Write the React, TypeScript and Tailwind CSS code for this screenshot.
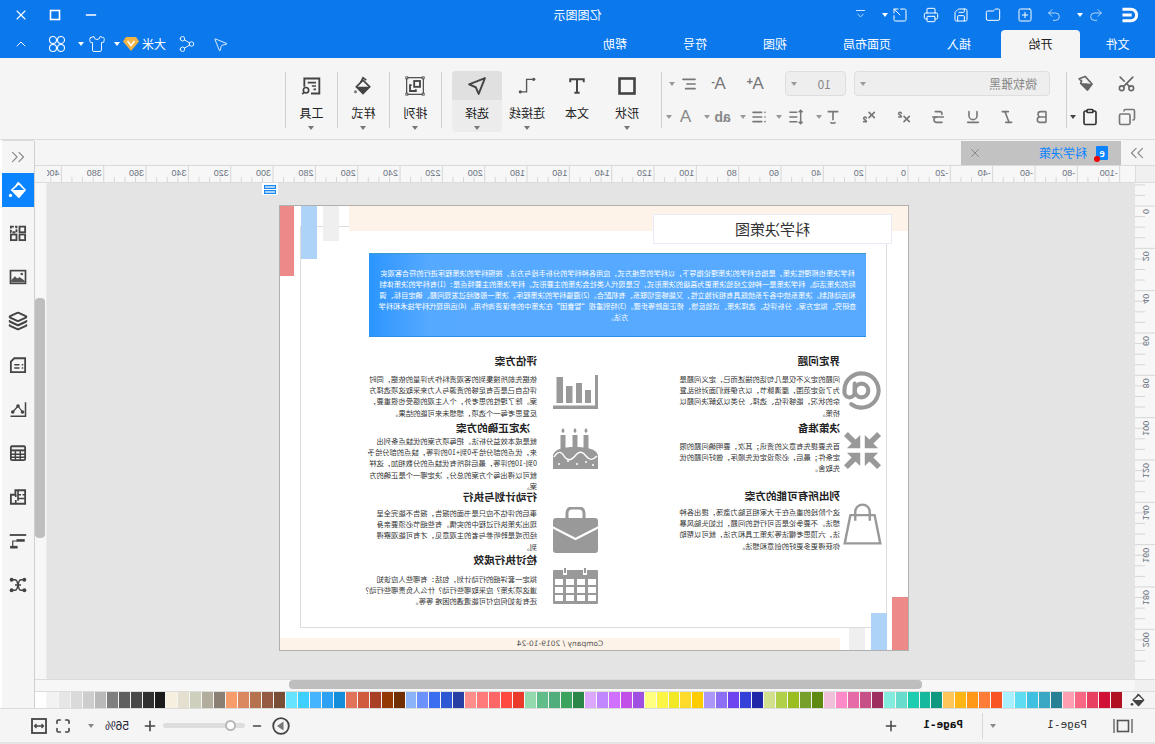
import React from 'react';
import {
  AlignLeft, AtSign, Bold, ChevronDown, ChevronUp, ChevronsLeft, ChevronsRight, Clipboard, Copy,
  Folder, Italic, Layers, List, Maximize, Minus, MousePointer2, Plus, Printer, Redo2, Save,
  Scissors, Share2, Shirt, SquareArrowOutUpRight, SquarePlus, Strikethrough, Subscript,
  Superscript, Underline, Undo2, X,
} from 'lucide-react';

// the reference is a mirrored shot, so the root is flipped and everything below is written un-mirrored

const swatches = [
  '#ffffff', '#f2f2f2', '#e6e6e6', '#dadada', '#cdcdcd', '#b9b9b9', '#7f7f7f', '#5e5e5e', '#484848', '#303030', '#1a1a1a',
  '#f4efdf', '#e5dfd0', '#ced0bd', '#b2ad9d', '#8b7f73',
  '#f79d6c', '#d9885f', '#b6714f', '#955a42', '#794e36',
  '#66e3ff', '#3dcfff', '#44b4ff', '#2da2f5', '#148ddb',
  '#e0735a', '#d05a3e', '#a93f25', '#933800', '#712f00',
  '#8ab3f8', '#6b92ff', '#3a6df0', '#2e58d3', '#2840a4',
  '#ff8d8a', '#ff7a7a', '#ff6666', '#ff4a42', '#e93a2c',
  '#93d9ae', '#60bd8a', '#52ad7c', '#3ba35e', '#2b8749',
  '#dca8ff', '#c087ff', '#d070ff', '#c150e8', '#a050e0',
  '#ffff80', '#fcf545', '#f2e826', '#ffdb2c', '#ffcc00',
  '#ac96f8', '#8c6ff5', '#6e44f0', '#3440d8', '#1f27a8',
  '#d2e08e', '#b0d048', '#9abd20', '#76a02a', '#5e8a12',
  '#f0c0d8', '#ff8ac8', '#e66aa8', '#c85088', '#9e2e60',
  '#84ecdc', '#68dccc', '#1ccdb0', '#14b89c', '#119880',
  '#ffc558', '#ffb614', '#ff9818', '#ff7c38', '#f85424',
  '#a8f0ff', '#60dcf0', '#40c0e0', '#38a8c4', '#288094',
  '#ff9eb0', '#f86884', '#e84060', '#d01034', '#b01020',
];

const tabs = [
  { label: '文件', w: 'w-[75px]' },
  { label: '开始', w: 'w-[79px]', active: true },
  { label: '插入', w: 'w-[84px]' },
  { label: '页面布局', w: 'w-[100px]' },
  { label: '视图', w: 'w-[84px]' },
  { label: '符号', w: 'w-[76px]' },
  { label: '帮助', w: 'w-[84px]' },
];

// full-width punctuation for the Chinese copy
const zh = (s: string) =>
  s.replace(/,/g, '\uFF0C').replace(/;/g, '\uFF1B').replace(/:/g, '\uFF1A').replace(/\?/g, '\uFF1F');

// drawn as seen in the shot, then flipped back so the root flip lands it right
function Flip({ w = 18, h = 18, box = '0 0 24 24', className = '', children }: { w?: number; h?: number; box?: string; className?: string; children: React.ReactNode }) {
  return (
    <svg width={w} height={h} viewBox={box} className={`-scale-x-100 shrink-0 ${className}`}>
      {children}
    </svg>
  );
}

const Caret = ({ className = 'border-t-[#777]' }: { className?: string }) => (
  <span className={`block w-0 h-0 border-x-[3px] border-x-transparent border-t-[4px] shrink-0 ${className}`} />
);

const Bucket = ({ color, w = 18, h = 18 }: { color: string; w?: number; h?: number }) => (
  <Flip w={w} h={h}>
    <path d="M4.5 12 13 4l7.5 8-7.5 8.5z" fill="none" stroke={color} strokeWidth="2" strokeLinejoin="round" />
    <path d="M4.5 12h16l-7.5 8.5z" fill={color} />
    <path d="M9.5 7.5 12 3.5l3.5 3" fill="none" stroke={color} strokeWidth="1.8" />
    <circle cx="3" cy="18.5" r="2" fill={color} />
  </Flip>
);

const sideIcons = [
  <Flip key="grid"><g fill="none" stroke="#444" strokeWidth="2.4"><rect x="2.5" y="3.5" width="7.5" height="7.5" strokeDasharray="4 1.5" /><rect x="14" y="3.5" width="7.5" height="7.5" /><rect x="2.5" y="14" width="7.5" height="7.5" /><rect x="14" y="14" width="7.5" height="7.5" /></g></Flip>,
  <Flip key="image"><rect x="2" y="3.5" width="20" height="17" fill="none" stroke="#444" strokeWidth="2.2" /><path d="M3 19v-3l5-5 3 3 3-2 7 5v2z" fill="#555" /><circle cx="17" cy="8" r="1.8" fill="#555" /></Flip>,
  <Layers key="layers" size={20} color="#444" strokeWidth={2.4} />,
  <Flip key="note"><path d="M7 3h14.5v18.5h-19V7.5z" fill="none" stroke="#444" strokeWidth="2.4" /><path d="M7 11.5h7M7 16h7M17 11.5h2M17 16h2" stroke="#444" strokeWidth="2" /></Flip>,
  <Flip key="graph"><path d="M22 3v18.5H2" fill="none" stroke="#444" strokeWidth="2" /><path d="M5 16 12 8l6 8" fill="none" stroke="#444" strokeWidth="1.6" /><circle cx="5" cy="16" r="2.4" fill="#444" /><circle cx="12" cy="8" r="2.4" fill="#444" /><circle cx="18" cy="16" r="2.4" fill="#444" /></Flip>,
  <Flip key="table"><rect x="2.5" y="3" width="19" height="18.5" rx="1.5" fill="none" stroke="#444" strokeWidth="2.4" /><path d="M2.5 8.5h19" stroke="#444" strokeWidth="2.6" /><path d="M2.5 13.5h19M2.5 17.5h19M8.5 8.5v13M15 8.5v13" stroke="#444" strokeWidth="2" /></Flip>,
  <Flip key="plan"><path d="M2.5 9h6V3h13v18h-19z" fill="none" stroke="#444" strokeWidth="2.4" /><path d="M9 9v3M9 16v5M12 3v6h4M12 9v8M12 14h9M18 9h4" stroke="#444" strokeWidth="2.2" fill="none" /></Flip>,
  <Flip key="tree"><path d="M1 4h22" stroke="#444" strokeWidth="2.4" /><path d="M5 19v-7h6" fill="none" stroke="#444" strokeWidth="1.6" /><rect x="10" y="9.5" width="11" height="3.5" fill="#444" /><rect x="1.5" y="18.5" width="10" height="3.5" fill="#444" /></Flip>,
  <Flip key="mind"><path d="M4 5h4c3 0 3 3 4 7s1 7 4 7h4M4 19h4c3 0 3-3 4-7s1-7 4-7h4M8 12h8" fill="none" stroke="#444" strokeWidth="1.8" /><circle cx="3.5" cy="5" r="2.6" fill="#444" /><circle cx="20.5" cy="5" r="2.6" fill="#444" /><circle cx="3.5" cy="19" r="2.6" fill="#444" /><circle cx="20.5" cy="19" r="2.6" fill="#444" /></Flip>,
];

const GrayIcon = {
  stat: (
    <Flip w={45} h={34} box="0 0 45 34">
      <g fill="#999"><rect x="3.5" y="2" width="6.5" height="26" /><rect x="13" y="11" width="6.5" height="17" /><rect x="23" y="8" width="6" height="20" /><rect x="32" y="15" width="6" height="13" /><rect x="42" y="0" width="3" height="34" /><rect x="0" y="30.5" width="45" height="3.5" /></g>
    </Flip>
  ),
  cake: (
    <Flip w={45} h={42} box="0 0 45 42">
      <g fill="#999">
        <path d="M10 1c2 2 2 4 0 5-2-1-2-3 0-5zM22 1c2 2 2 4 0 5-2-1-2-3 0-5zM33 1c2 2 2 4 0 5-2-1-2-3 0-5z" />
        <rect x="7.5" y="8" width="5" height="14" /><rect x="19.5" y="8" width="5" height="14" /><rect x="30.5" y="8" width="5" height="14" />
        <path d="M0 28c2-6 10-8 22-8s21 2 23 8v14H0z" />
      </g>
      <path d="M1 30c4-6 7-6 10-1s7 5 11 0 7-5 11 0 7 4 11 0" fill="none" stroke="#fff" strokeWidth="1.4" />
      <g fill="#fff"><circle cx="6" cy="37" r="1" /><circle cx="15" cy="34" r="1" /><circle cx="24" cy="37" r="1" /><circle cx="33" cy="35" r="1" /><circle cx="40" cy="38" r="1" /></g>
    </Flip>
  ),
  case: (
    <Flip w={45} h={46} box="0 0 45 46">
      <path d="M14 11V6c0-3 2-5 5-5h7c3 0 5 2 5 5v5" fill="none" stroke="#999" strokeWidth="3" />
      <rect x="0" y="11" width="45" height="35" rx="3" fill="#999" />
      <path d="M-1 20 22.5 32 46 20" fill="none" stroke="#fff" strokeWidth="2.4" />
    </Flip>
  ),
  cal: (
    <Flip w={45} h={36} box="0 0 45 36">
      <rect x="0" y="2" width="45" height="34" rx="1" fill="#999" />
      <g fill="#fff">
        <rect x="10" y="0" width="4" height="7" /><rect x="30" y="0" width="4" height="7" />
        {[11, 19, 27].map((y) => [2, 13, 24, 35].map((x) => <rect key={`${x}-${y}`} x={x} y={y} width="8" height="6" />))}
      </g>
      <g fill="#999"><rect x="11" y="0" width="2" height="5" /><rect x="31" y="0" width="2" height="5" /></g>
    </Flip>
  ),
  compress: (
    <svg width="39" height="41" viewBox="0 0 24 24" className="shrink-0">
      {['', 'translate(24 0) scale(-1 1)', 'translate(0 24) scale(1 -1)', 'translate(24 24) scale(-1 -1)'].map((t) => (
        <path key={t} transform={t} d="M10.6 10.6H2.4l2.9-2.9L.6 3 3 .6l4.7 4.7 2.9-2.9z" fill="#999" />
      ))}
    </svg>
  ),
  bag: (
    <Flip w={39} h={42} box="0 0 24 26">
      <path d="M4.5 7.5h15l3.5 17.5H1z" fill="none" stroke="#999" strokeWidth="1.5" />
      <path d="M7.5 11V5.5a4.5 4.5 0 0 1 9 0V11" fill="none" stroke="#999" strokeWidth="1.5" />
    </Flip>
  ),
};

const leftCol = [
  {
    h: 'h-[67px]', iconTop: 'mt-[17px]', icon: <AtSign size={41} color="#999" strokeWidth={2.4} />, bodyTop: 'mt-[5px]', title: '界定问题',
    lines: ['问题的定义不仅是几句话的描述而已,定义问题是', '为了设定范围,厘清脉节,以方便我们面对纷乱复', '杂的状况,能够评估、选择、分类以及解决问题以', '桥策。'],
  },
  {
    h: 'h-[68px]', iconTop: 'mt-[10px]', icon: GrayIcon.compress, bodyTop: 'mt-[5px]', title: '决策准备',
    lines: ['首先要提先有意义的资讯;其次,要明确问题的限', '定条件;最后,必须设定优先顺序,做好问题的优', '先取舍。'],
  },
  {
    h: 'h-[67px]', iconTop: 'mt-[15px]', icon: GrayIcon.bag, bodyTop: 'mt-[3px]', title: '列出所有可能的方案',
    lines: ['这个阶段的重点在于大家相互脑力激荡,提出各种', '想法。不要争论是否可行性的问题,比如头脑风暴', '法,六顶思考帽法等决策工具和方法,就可以帮助', '你获得更多更好的创意和想法。'],
  },
];

const rightCol = [
  {
    h: 'h-[67px]', iconTop: 'mt-[22px]', icon: GrayIcon.stat, bodyTop: 'mt-[5px]', title: '评估方案',
    lines: ['依据先前所搜集到的客观资料作为评量的依据,同时', '评估自己是否有足够的资源与人力来采取这项选择方', '案。除了理性的思考外,个人主观的感受也很重要,', '反复思考每一个选项,想想未来可能的结果。'],
  },
  {
    h: 'h-[69px]', iconTop: 'mt-[7px]', icon: GrayIcon.cake, bodyTop: 'mt-0', title: '决定正确的方案', indent: 'pl-[7px]',
    lines: ['就是成本效益分析法。把每项方案的优缺点条列出', '来,优点的部分给予0到+10的评等,缺点的部分给予', '0到-10的评等,最后将所有优缺点的分数相加,这样', '就可以得出每个方案的总分,决定哪一个是正确的方', '案。'],
  },
  {
    h: 'h-[63px]', iconTop: 'mt-[18px]', icon: GrayIcon.case, bodyTop: 'mt-[3px]', title: '行动计划与执行',
    lines: ['事后的评估不应只是书面的报告,报告不能完全呈', '现出决策执行过程中的实情。有些细节必须要亲身', '经历或是聆听参与者的主观意见,才有可能观察得', '到。'],
  },
  {
    h: 'h-[60px]', iconTop: 'mt-[16px]', icon: GrayIcon.cal, bodyTop: 'mt-[6px]', title: '检讨执行成效',
    lines: ['拟定一套详细的行动计划,包括:有哪些人应该知', '道这项决策?应采取哪些行动?什么人负责哪些行动?', '还有该如何应付可能遭遇的困难 等等。'],
  },
];

const introLines = [
  '科学决策也称理性决策,是指在科学的决策理论指导下,以科学的思维方式,应用各种科学的分析手段与方法,按照科学的决策程序进行的符合客观实',
  '际的决策活动。科学决策是一种较之经验决策更为高级的决策形式,它是现代人类社会决策的主要形式。科学决策的主要特点是:(1)有科学的决策体制',
  '和运动机制。决策系统中各子系统既具有相对独立性,又能够密切联系、有机配合。(2)遵循科学的决策程序。决策一般都经过发现问题、确定目标、调',
  '查研究、拟定方案、分析评估、选择决策、试验反馈、修正追踪等步骤。(3)特别重视“智囊团”在决策中的参谋咨询作用。(4)运用现代科学技术和科学',
  '方法。',
];

type Sec = (typeof leftCol)[number] & { indent?: string };

function Section({ sec, iconW, textW }: { sec: Sec; iconW: string; textW: string }) {
  return (
    <div className={`flex ${sec.h}`}>
      <div className={`shrink-0 ${iconW} ${sec.iconTop}`}>{sec.icon}</div>
      <div className={textW}>
        <div className={`h-4 leading-4 text-[10.6px] font-bold text-[#222] whitespace-nowrap ${sec.indent ?? ''}`}>{sec.title}</div>
        <div className={`text-[7.3px] leading-[11.2px] text-[#333] ${sec.bodyTop}`}>
          {sec.lines.map((l) => (
            <div key={l} className="whitespace-nowrap">{zh(l)}</div>
          ))}
        </div>
      </div>
    </div>
  );
}

const UNIT = 42.33;

function HRuler() {
  const marks = Array.from({ length: 26 }, (_, i) => i - 5);
  return (
    <svg width="1088" height="16" className="block overflow-visible font-['Liberation_Sans',sans-serif]">
      {marks.map((n) => {
        const x = 227 + n * UNIT;
        return (
          <g key={n}>
            <line x1={x} x2={x} y1={0} y2={16} stroke="#d6d6d6" />
            {[1, 2, 3].map((q) => (
              <line key={q} x1={x + (q * UNIT) / 4} x2={x + (q * UNIT) / 4} y1={11} y2={16} stroke="#d6d6d6" />
            ))}
            <text x={x + 2} y={10} fontSize="9" fill="#6a7280">{n * 20}</text>
          </g>
        );
      })}
    </svg>
  );
}

function VRuler() {
  const marks = Array.from({ length: 11 }, (_, i) => i);
  return (
    <svg width="20" height="497" className="block font-['Liberation_Sans',sans-serif]">
      {[-1, ...marks].map((n) => {
        const y = 23 + n * UNIT;
        return (
          <g key={n}>
            <line x1={0} x2={20} y1={y} y2={y} stroke="#d6d6d6" />
            {[1, 2, 3].map((q) => (
              <line key={q} x1={10} x2={20} y1={y + (q * UNIT) / 4} y2={y + (q * UNIT) / 4} stroke="#d6d6d6" />
            ))}
            {n >= 0 && (
              <text transform={`translate(12 ${y + 3}) rotate(-90)`} textAnchor="end" fontSize="9" fill="#6a7280">{n * 20}</text>
            )}
          </g>
        );
      })}
    </svg>
  );
}

function BigButton({ label, icon, caret = true, active }: { label: string; icon: React.ReactNode; caret?: boolean; active?: boolean }) {
  return (
    <div className={`w-[50px] h-[61px] flex flex-col items-center rounded-sm ${active ? 'bg-[#ececec]' : ''}`}>
      <div className={`w-full h-[29px] flex items-center justify-center rounded-t-sm ${active ? 'bg-[#e0e0e0]' : ''}`}>{icon}</div>
      <div className="mt-[3px] h-[20px] leading-[20px] text-xs text-[#222]">{label}</div>
      {caret && <Caret className="mt-[3px] border-t-[#777]" />}
    </div>
  );
}

const Sep = ({ className = '' }: { className?: string }) => <div className={`w-px h-[56px] mt-[1px] bg-[#cfcfcf] shrink-0 ${className}`} />;

function MiniA({ sign }: { sign?: string }) {
  return (
    <span className="relative block w-6 text-center leading-6 text-[17px] text-[#777] font-['Liberation_Sans',sans-serif]">
      A
      {sign && <span className="absolute -top-[3px] left-[17px] font-bold text-[11px] text-[#777]">{sign}</span>}
    </span>
  );
}

function Ribbon() {
  const gray = { size: 16, color: '#777', strokeWidth: 2.4 };
  return (
    <div className="h-[82px] bg-[#f5f5f5] border-b border-[#dcdcdc] pt-[13px] flex">
      {/* clipboard */}
      <div className="w-[88px] h-[60px] relative shrink-0">
        <div className="flex items-center h-[25px] pl-[19px]">
          <Scissors size={19} color="#666" strokeWidth={2} className="-rotate-90" />
          <Flip w={18} h={18} className="ml-[22px]">
            <path d="M3 5 11 2l9 10-6 8-9-9 1-3z" fill="none" stroke="#666" strokeWidth="2.4" strokeLinejoin="round" />
            <path d="M5 11l9 9 6-8-8-1z" fill="#666" />
          </Flip>
        </div>
        <div className="flex items-center h-[25px] mt-[8px] pl-[19px]">
          <Copy size={18} color="#777" strokeWidth={2.2} />
          <Clipboard size={18} color="#333" strokeWidth={2.2} className="ml-[19px]" />
          <Caret className="ml-[5px] border-t-[#444]" />
        </div>
      </div>
      <Sep />
      {/* font */}
      <div className="w-[404px] h-[60px] shrink-0">
        <div className="flex items-center h-[25px]">
          <div className="w-[196px] h-[25px] ml-[16px] bg-[#eeeeee] border border-[#dedede] rounded-sm flex items-center pl-[12px] pr-[5px] text-xs text-[#888]">
            微软雅黑<Caret className="ml-auto border-t-[#999]" />
          </div>
          <div className="w-[61px] h-[25px] ml-[8px] bg-[#eeeeee] border border-[#dedede] rounded-sm flex items-center pl-[14px] pr-[5px] text-xs text-[#888]">
            10<Caret className="ml-auto border-t-[#999]" />
          </div>
          <div className="ml-[15px]"><MiniA sign="+" /></div>
          <div className="ml-[14px]"><MiniA sign="-" /></div>
          <AlignLeft size={16} color="#777" strokeWidth={2.6} className="ml-[11px]" />
          <Caret className="ml-[6px] border-t-[#999]" />
        </div>
        <div className="flex items-center h-[25px] mt-[8px] pl-[7px]">
          {[Bold, Italic, Underline, Strikethrough, Superscript, Subscript].map((Ic, i) => (
            <div key={i} className="w-[34.5px] flex justify-center"><Ic {...gray} /></div>
          ))}
          <div className="w-[37px] flex items-center justify-center relative">
            <Flip w={16} h={16}>
              <path d="M4 4h16M12 4v13M8 4V3M16 4V3M8 20c3 2 5 2 8 0" stroke="#777" strokeWidth="2.4" fill="none" />
            </Flip>
            <Caret className="absolute right-[1px] top-[6px] border-t-[#999]" />
          </div>
          <div className="w-[37px] flex items-center justify-center relative">
            <Flip w={18} h={16}>
              <path d="M2 5h12M2 12h12M2 19h12M19 2v20M16 5l3-3 3 3M16 19l3 3 3-3" stroke="#777" strokeWidth="2.2" fill="none" />
            </Flip>
            <Caret className="absolute right-[-2px] top-[6px] border-t-[#999]" />
          </div>
          <div className="w-[37px] flex items-center justify-center relative">
            <List {...gray} />
            <Caret className="absolute right-[-1px] top-[6px] border-t-[#999]" />
          </div>
          <div className="w-[37px] flex items-center justify-center relative">
            <span className="text-[14px] leading-4 font-bold text-[#888] font-['Liberation_Sans',sans-serif]">ab</span>
            <Caret className="absolute right-[0px] top-[6px] border-t-[#999]" />
          </div>
          <div className="w-[37px] flex items-center justify-center relative">
            <span className="text-[17px] leading-4 text-[#888] font-['Liberation_Sans',sans-serif]">A</span>
            <Caret className="absolute right-[-1px] top-[6px] border-t-[#999]" />
          </div>
        </div>
      </div>
      <Sep />
      {/* shapes */}
      <div className="w-[9px] shrink-0" />
      <BigButton label="形状" icon={<svg width="18" height="18"><rect x="1.5" y="1.5" width="15" height="15" fill="none" stroke="#444" strokeWidth="2.6" /></svg>} />
      <BigButton
        label="文本"
        caret={false}
        icon={
          <Flip w={18} h={18}>
            <path d="M3 7V3h18v4M12 3v18M8.5 21h7" fill="none" stroke="#444" strokeWidth="2.6" />
          </Flip>
        }
      />
      <BigButton
        label="连接线"
        icon={
          <Flip w={20} h={20}>
            <path d="M5 19h6.5V4H18" fill="none" stroke="#555" strokeWidth="1.6" />
            <circle cx="4" cy="19" r="2" fill="#555" />
            <circle cx="20" cy="4" r="2" fill="#555" />
          </Flip>
        }
      />
      <BigButton
        label="选择"
        active
        icon={
          <Flip w={20} h={20}>
            <path d="M21.5 2.5 2.5 10l8 3.5 3.5 8z" fill="none" stroke="#444" strokeWidth="2.3" strokeLinejoin="round" />
          </Flip>
        }
      />
      <div className="w-[10px] shrink-0" />
      <Sep />
      <div className="w-[51px] shrink-0 flex justify-center">
        <BigButton
          label="排列"
          icon={
            <Flip w={20} h={20}>
              <rect x="2" y="2" width="20" height="20" fill="none" stroke="#444" strokeWidth="1.4" />
              <g fill="#fff" stroke="#444"><rect x="1" y="1" width="2.4" height="2.4" /><rect x="20.6" y="1" width="2.4" height="2.4" /><rect x="1" y="20.6" width="2.4" height="2.4" /><rect x="20.6" y="20.6" width="2.4" height="2.4" /></g>
              <rect x="11" y="6" width="7" height="7" fill="none" stroke="#444" strokeWidth="2.2" />
              <path d="M8 11H6v7h7v-2" fill="none" stroke="#444" strokeWidth="2.2" />
            </Flip>
          }
        />
      </div>
      <Sep />
      <div className="w-[51px] shrink-0 flex justify-center">
        <BigButton
          label="样式"
          icon={
            <Flip w={20} h={20}>
              <path d="M4 13 12 5l8 8-8 8z" fill="none" stroke="#444" strokeWidth="2" />
              <path d="M4 13h16l-8 8z" fill="#444" />
              <path d="M9 8l3-6 4 3" fill="none" stroke="#444" strokeWidth="1.8" />
              <circle cx="3" cy="19" r="1.8" fill="#777" />
            </Flip>
          }
        />
      </div>
      <Sep />
      <div className="w-[51px] shrink-0 flex justify-center">
        <BigButton
          label="工具"
          icon={
            <Flip w={20} h={20}>
              <path d="M4 13V3h18v18H12" fill="none" stroke="#444" strokeWidth="2.2" />
              <path d="M8 8h10M13 12h5M15 16h3" stroke="#444" strokeWidth="2" />
              <circle cx="6" cy="17" r="3.2" fill="none" stroke="#444" strokeWidth="2" />
              <path d="M3.5 19.5 1.5 22" stroke="#444" strokeWidth="2" />
            </Flip>
          }
        />
      </div>
      <Sep />
    </div>
  );
}

const Square16 = () => (
  <svg width="16" height="16" className="ml-[20px]"><rect x="3.5" y="3.5" width="9" height="9" fill="none" stroke="#fff" strokeWidth="1.6" /></svg>
);

function Header() {
  const ic = { size: 16, color: '#fff', strokeWidth: 1.5 };
  return (
    <div className="h-[58px] bg-[#0b78ec] text-white shrink-0">
      <div className="h-[30px] grid grid-cols-[1fr_auto_1fr] items-center">
        <div className="flex items-center pl-[15px]">
          <svg width="20" height="20" viewBox="0 0 24 24">
            <path d="M21 5H11a7 7 0 0 0 0 14h10M10 12h11" fill="none" stroke="#fff" strokeWidth="3.6" />
          </svg>
          <Undo2 {...ic} className="ml-[16px] opacity-70" />
          <Caret className="ml-[5px] border-t-white" />
          <Redo2 {...ic} className="ml-[15px] opacity-70" />
          <SquarePlus {...ic} className="ml-[13px]" />
          <Folder {...ic} className="ml-[16px]" />
          <Save {...ic} className="ml-[16px]" />
          <Printer {...ic} className="ml-[14px]" />
          <SquareArrowOutUpRight {...ic} className="ml-[15px]" />
          <Caret className="ml-[4px] border-t-white" />
          <div className="ml-[15px] w-3 flex flex-col items-center">
            <span className="w-[9px] h-px bg-white opacity-80" />
            <ChevronDown size={11} color="#fff" className="-mt-px opacity-80" />
          </div>
        </div>
        <div className="text-xs text-center">亿图图示</div>
        <div className="flex items-center justify-end pr-[13px]">
          <Minus size={16} color="#fff" strokeWidth={2} />
          <Square16 />
          <X size={16} color="#fff" strokeWidth={1.6} className="ml-[18px]" />
        </div>
      </div>
      <div className="h-[28px] flex items-center">
        <div className="flex h-full">
          {tabs.map((t) => (
            <div key={t.label} className={`${t.w} flex items-center justify-center text-xs ${t.active ? 'bg-[#f5f5f5] text-[#222] rounded-t-sm' : ''}`}>
              {t.label}
            </div>
          ))}
        </div>
        <div className="flex items-center ml-[335px]">
          <div className="w-[34px] flex justify-center"><MousePointer2 size={17} color="#fff" strokeWidth={1.2} className="-scale-x-100" /></div>
          <div className="w-[34px] flex justify-center"><Share2 size={18} color="#fff" strokeWidth={1.2} /></div>
          <span className="ml-[4px] w-6 text-xs">大米</span>
          <svg width="16" height="14" viewBox="0 0 16 14" className="ml-[3px]">
            <path d="M3 0h10l3 4.5L8 14 0 4.5z" fill="#f3b345" />
            <path d="M4.5 4 8 8.5 11.5 4" fill="none" stroke="#fff" strokeWidth="1.6" />
          </svg>
          <Caret className="ml-[3px] border-t-white" />
          <Shirt size={18} color="#fff" strokeWidth={1.2} className="ml-[8px]" />
          <Caret className="ml-[4px] border-t-white" />
          <svg width="18" height="18" viewBox="0 0 18 18" className="ml-[12px]" fill="none" stroke="#fff" strokeWidth="1.1">
            <circle cx="5" cy="5" r="3.5" /><circle cx="13" cy="5" r="3.5" /><circle cx="5" cy="13" r="3.5" /><circle cx="13" cy="13" r="3.5" />
          </svg>
          <ChevronUp size={16} color="#fff" strokeWidth={1.5} className="ml-[19px]" />
        </div>
      </div>
    </div>
  );
}

function Page() {
  return (
    <div className="relative ml-[226px] mt-[22px] w-[630px] h-[446px] bg-white border border-[#b0b0b0]">
      <div className="absolute left-[21px] top-[20px] w-[587px] h-[402px] border border-[#dcdcdc]" />
      <div className="absolute left-0 top-0 w-[559px] h-[25px] bg-[#fef3e8]" />
      <div className="absolute right-0 top-0 w-[14px] h-[70px] bg-[#ec8989]" />
      <div className="absolute right-[21px] top-0 w-4 h-[53px] bg-[#add4f8]" />
      <div className="absolute right-[43px] top-0 w-4 h-[35px] bg-[#efefef]" />
      <div className="absolute left-0 bottom-0 w-4 h-[53px] bg-[#ec8989]" />
      <div className="absolute left-[21px] bottom-0 w-4 h-[37px] bg-[#add4f8]" />
      <div className="absolute left-[43px] bottom-0 w-4 h-[22px] bg-[#efefef]" />
      <div className="absolute left-[68px] bottom-0 w-[560px] h-3 bg-[#fef3e8] flex items-center justify-center text-[7.5px] text-[#555] font-['DejaVu_Sans',sans-serif]">
        Company / 2019-10-24
      </div>
      <div className="absolute left-[16px] top-[8px] w-[239px] h-[30px] bg-white border border-[#e8ecf8] flex items-center justify-center text-[15px] text-[#333]">
        科学决策图
      </div>

      <div className="relative pt-[47px]">
        <div className="ml-[42px] w-[497px] h-[84px] bg-linear-to-r from-[#57aaff] via-[#55a9ff] via-[88%] to-[#2a95ff] border-t border-t-[#3d9bd0] border-b border-b-[#2e8fe8] flex flex-col justify-center items-center text-[7.2px] leading-[11px] text-white">
          {introLines.map((l) => (
            <div key={l} className="whitespace-nowrap">{zh(l)}</div>
          ))}
        </div>
        <div className="flex mt-[16px] ml-[26px]">
          <div className="w-[284px]">
            {leftCol.map((s) => <Section key={s.title} sec={s} iconW="w-[42px]" textW="w-[170px]" />)}
          </div>
          <div>
            {rightCol.map((s) => <Section key={s.title} sec={s} iconW="w-[61px]" textW="w-[176px]" />)}
          </div>
        </div>
      </div>
    </div>
  );
}

export default function App() {
  return (
    <div className="w-[1155px] h-[744px] -scale-x-100 overflow-hidden bg-white flex flex-col font-['Noto_Sans_CJK_SC','Liberation_Sans',sans-serif]">
      <Header />
      <Ribbon />
      <div className="h-[568px] flex shrink-0">
        <div className="w-[1120px] flex flex-col">
          {/* file tabs */}
          <div className="h-[26px] bg-[#f5f5f5] border-b border-[#dadada] flex shrink-0">
            <div className="w-[34px] flex items-center justify-center pl-[2px]">
              <ChevronsRight size={22} color="#888" strokeWidth={1.2} />
            </div>
            <div className="w-[160px] h-[24px] mt-px bg-[#c2c2c2] flex items-center pl-[13px] text-xs text-[#0a84ff]">
              <span className="relative w-3 h-[14px] bg-[#0a84ff] rounded-[1px] flex items-center justify-center text-[9px] leading-none text-white font-bold shrink-0">
                e
                <span className="absolute -right-[2px] bottom-[-2px] w-[6px] h-[6px] rounded-full bg-[#f00000]" />
              </span>
              <span className="ml-[9px]">科学决策</span>
              <X size={14} color="#777" strokeWidth={1.3} className="ml-[57px]" />
            </div>
          </div>
          {/* ruler row */}
          <div className="h-[17px] flex shrink-0 bg-[#f7f7f7] border-b border-[#dcdcdc]">
            <div className="w-5 bg-[#f0f0f0] border-r border-[#dcdcdc] shrink-0" />
            <HRuler />
            <div className="w-3 bg-[#f5f5f5] shrink-0" />
          </div>
          <div className="h-[496px] flex shrink-0 overflow-hidden">
            <div className="w-5 bg-[#f7f7f7] shrink-0"><VRuler /></div>
            <div className="relative w-[1088px] h-full bg-[#e4e4e4] shrink-0">
              <Page />
              <div className="absolute left-[857px] top-0 w-4 h-3 bg-white flex flex-col items-center justify-center gap-px">
                <span className="w-3 h-1 border border-[#1a86f0] bg-[#a8d2f8]" />
                <span className="w-3 h-1 border border-[#1a86f0] bg-[#a8d2f8]" />
              </div>
            </div>
            <div className="relative w-3 bg-[#f7f7f7] border-l border-[#ececec] shrink-0">
              <div className="ml-px mt-[115px] w-[10px] h-[240px] rounded bg-[#bebebe]" />
            </div>
          </div>
          {/* bottom scrollbar */}
          <div className="h-[12px] flex shrink-0 bg-[#f7f7f7] border-t border-[#dcdcdc]">
            <div className="w-5 bg-[#f0f0f0]" />
            <div className="w-[1088px]">
              <div className="ml-[213px] w-[633px] h-[9px] rounded bg-[#bebebe]" />
            </div>
          </div>
          {/* colour strip */}
          <div className="h-[17px] flex shrink-0 bg-[#f5f5f5] border-t border-[#dcdcdc]">
            <div className="w-[33px] flex items-center justify-center shrink-0"><Bucket color="#444" w={16} h={16} /></div>
            <div className="flex-1 flex flex-row-reverse gap-px">
              {swatches.map((c, i) => (
                <div key={i} className="flex-1" style={{ backgroundColor: c }} />
              ))}
            </div>
          </div>
        </div>
        {/* side rail */}
        <div className="w-px bg-[#cfcfcf] shrink-0 mt-px" />
        <div className="w-[32px] bg-[#f5f5f5] flex flex-col items-center shrink-0">
          <div className="h-[33px] w-full flex items-center justify-center border-t border-[#dadada]">
            <ChevronsLeft size={22} color="#888" strokeWidth={1.2} />
          </div>
          <div className="h-[34px] w-full bg-[#0a84ff] flex items-center justify-center">
            <Bucket color="#fff" w={20} h={20} />
          </div>
          <div className="h-1" />
          {sideIcons.map((ic) => (
            <div key={ic.key} className="h-[44px] flex items-center justify-center">{ic}</div>
          ))}
        </div>
        <div className="w-[2px] bg-white shrink-0" />
      </div>
      {/* status bar */}
      <div className="h-[36px] bg-[#f5f5f5] border-t border-[#dcdcdc] border-b-2 border-b-[#e4e4e4] flex items-center shrink-0 pl-[22px] pr-[31px]">
        <svg width="20" height="14" viewBox="0 0 20 14" className="shrink-0">
          <rect x="4.5" y="1.5" width="11" height="11" fill="none" stroke="#555" strokeWidth="1.6" />
          <path d="M1 0v14M19 0v14" stroke="#666" strokeWidth="1.4" />
        </svg>
        <span className="ml-[26px] w-[40px] text-[11px] text-[#333] font-['DejaVu_Sans_Mono',monospace]">Page-1</span>
        <Caret className="ml-[51px] border-t-[#888]" />
        <div className="ml-[7px] w-px h-[26px] bg-[#d8d8d8]" />
        <span className="ml-[19px] w-[40px] text-[11px] font-bold text-[#111] font-['DejaVu_Sans_Mono',monospace]">Page-1</span>
        <Plus size={16} color="#444" strokeWidth={2.2} className="ml-[24px]" />
        <div className="ml-auto flex items-center">
          <svg width="18" height="18" viewBox="0 0 18 18">
            <circle cx="9" cy="9" r="7.8" fill="none" stroke="#444" strokeWidth="1.8" />
            <path d="M6.5 4.5v9L13 9z" fill="#777" />
          </svg>
          <Minus size={12} color="#444" strokeWidth={3} className="ml-[9px]" />
          <div className="relative ml-[6px] w-[82px] h-[5px] rounded bg-[#dddddd]">
            <span className="absolute left-[9px] -top-[3px] w-[11px] h-[11px] rounded-full bg-white border-2 border-[#b8b8b8]" />
          </div>
          <Plus size={16} color="#444" strokeWidth={2.4} className="ml-[5px]" />
          <span className="ml-[13px] w-[26px] text-[12px] text-[#223] font-['Liberation_Sans',sans-serif]">56%</span>
          <Caret className="ml-[9px] border-t-[#888]" />
          <Maximize size={16} color="#444" strokeWidth={2.4} className="ml-[17px]" />
          <svg width="16" height="16" viewBox="0 0 16 16" className="ml-[8px]">
            <rect x="1" y="1" width="14" height="14" fill="none" stroke="#444" strokeWidth="1.8" />
            <path d="M4 8h8M5.5 6 3.5 8l2 2M10.5 6l2 2-2 2" fill="none" stroke="#444" strokeWidth="1.3" />
          </svg>
        </div>
      </div>
    </div>
  );
}
